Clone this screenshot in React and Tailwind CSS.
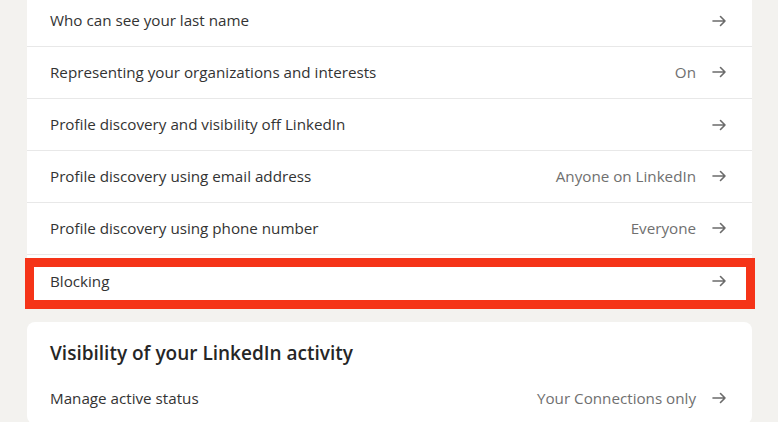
import React from 'react';

const rows = [
  { label: 'Who can see your last name', value: '' },
  { label: 'Representing your organizations and interests', value: 'On' },
  { label: 'Profile discovery and visibility off LinkedIn', value: '' },
  { label: 'Profile discovery using email address', value: 'Anyone on LinkedIn' },
  { label: 'Profile discovery using phone number', value: 'Everyone' },
  { label: 'Blocking', value: '', highlight: true },
];

const Arrow = () => (
  <svg width="15" height="14" viewBox="0 0 15 14" fill="none" className="shrink-0">
    <path d="M1 7h12M8.5 2.5 13 7l-4.5 4.5" stroke="#6b6b6b" strokeWidth="1.6" strokeLinecap="round" strokeLinejoin="round" />
  </svg>
);

const Row = ({ label, value, highlight, last }) => (
  <div className={`relative flex h-[52px] items-center justify-between pl-[23px] pr-[25px] ${last ? '' : 'border-b border-[#e8e8e8]'}`}>
    <span className="text-[15.2px] text-[#333333]">{label}</span>
    <div className="flex items-center gap-[16px]">
      {value && <span className="text-[15.2px] text-[#707070]">{value}</span>}
      <Arrow />
    </div>
    {highlight && (
      <div className="pointer-events-none absolute -left-[2px] -right-[3px] top-[3px] -bottom-[2px] border-[9px] border-[#f53418]" />
    )}
  </div>
);

export default function App() {
  return (
    <div className="h-[422px] w-[778px] overflow-hidden bg-[#f3f2ef] font-['Open_Sans',sans-serif]">
      <div className="ml-[27px] w-[725px]">
        <div className="-mt-[5px] rounded-b-lg bg-white">
          {rows.map((r, i) => (
            <Row key={r.label} {...r} last={i === rows.length - 1} />
          ))}
        </div>
        <div className="mt-[15px] rounded-lg bg-white pt-[17px]">
          <h2 className="pl-[23px] text-[19px] font-semibold leading-[28px] text-[#262626]">
            Visibility of your LinkedIn activity
          </h2>
          <div className="mt-[5px] flex h-[52px] items-center justify-between pl-[23px] pr-[25px]">
            <span className="text-[15.2px] text-[#333333]">Manage active status</span>
            <div className="flex items-center gap-[16px]">
              <span className="text-[15.2px] text-[#707070]">Your Connections only</span>
              <Arrow />
            </div>
          </div>
        </div>
      </div>
    </div>
  );
}
